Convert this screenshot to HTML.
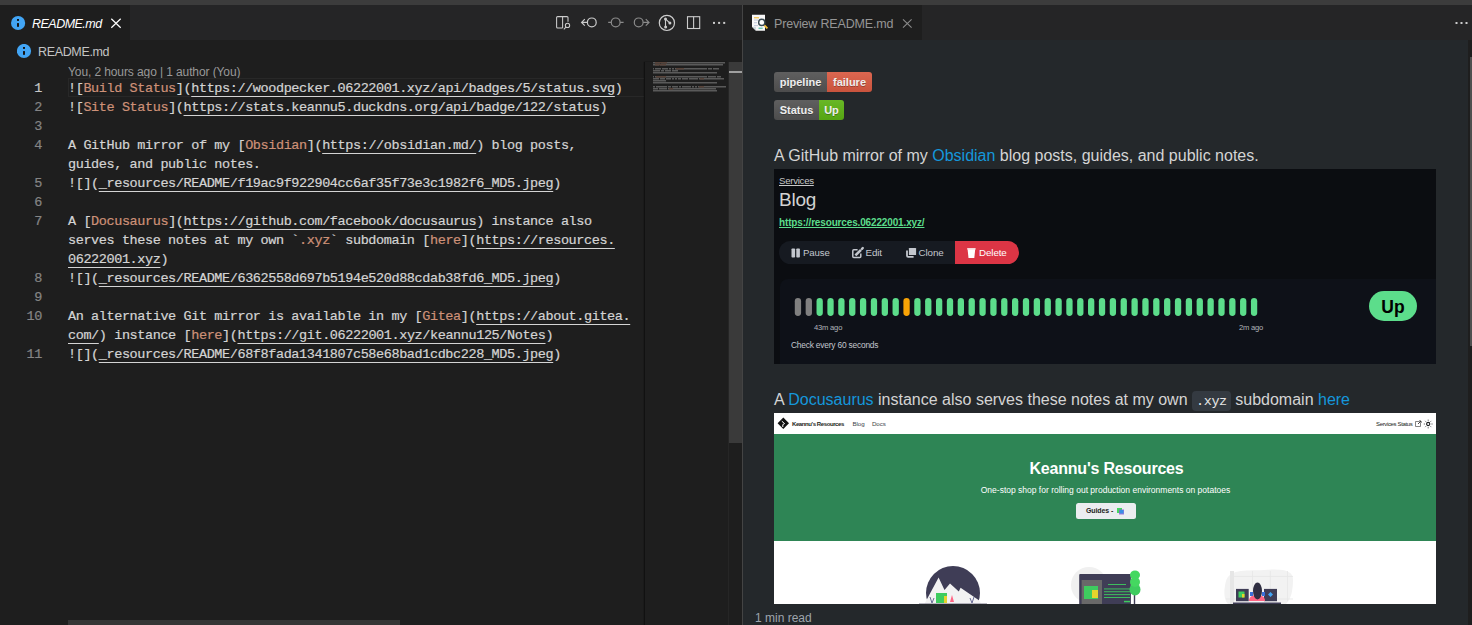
<!DOCTYPE html>
<html><head><meta charset="utf-8">
<style>
*{margin:0;padding:0;box-sizing:border-box}
html,body{width:1472px;height:625px;overflow:hidden;background:#1e1e1e;font-family:"Liberation Sans",sans-serif}
.abs{position:absolute}
#titlestrip{left:0;top:0;width:1472px;height:5px;background:#3c3c3c}
#tabbar1{left:0;top:5px;width:742px;height:35px;background:#252526}
#tabbar2{left:743px;top:5px;width:729px;height:35px;background:#252526}
#divider{left:742px;top:5px;width:1px;height:620px;background:#444444}
.tab{top:5px;height:35px;background:#1e1e1e}
.tabtxt{white-space:pre;font-size:12.5px;letter-spacing:-0.2px}
.mono{font-family:"Liberation Mono",monospace;font-size:13.5px;letter-spacing:-0.4px;white-space:pre;-webkit-text-stroke:0.2px currentColor}
.ln{position:absolute;left:0;width:42px;text-align:right;color:#858585;height:19px;line-height:20px;padding-top:1px}
.row{position:absolute;left:68px;height:19px;line-height:20px;padding-top:1px;color:#d4d4d4}
.lk{color:#ce9178}
.u{text-decoration:underline;text-underline-offset:4px;text-decoration-thickness:1px}
#preview{left:743px;top:40px;width:729px;height:585px;background:#24282b;overflow:hidden}
.pp{position:absolute;left:31px;font-size:16px;color:#d4d4d4;white-space:pre;line-height:20px}
.plink{color:#1597db}
</style></head>
<body>
<div id="titlestrip" class="abs"></div>
<div id="tabbar1" class="abs"></div>
<div id="tabbar2" class="abs"></div>
<!-- left active tab -->
<div class="abs tab" style="left:0;width:130px"></div>
<svg class="abs" style="left:10px;top:15px" width="16" height="16" viewBox="0 0 16 16"><circle cx="8.1" cy="8" r="7.1" fill="#42a5f5"/><rect x="7" y="8.1" width="2" height="3.7" fill="#141414"/><rect x="7" y="4" width="2" height="1.9" fill="#141414"/></svg>
<div class="abs tabtxt" style="left:32px;top:16.5px;color:#ffffff;font-style:italic;letter-spacing:-0.52px">README.md</div>
<svg class="abs" style="left:108px;top:15px" width="16" height="16" viewBox="0 0 16 16"><path d="M3.3 3.8L12.7 12.8M12.7 3.8L3.3 12.8" stroke="#ffffff" stroke-width="1.2"/></svg>


<!-- editor toolbar -->
<svg class="abs" style="left:550px;top:8px" width="200" height="30" viewBox="0 0 200 30" fill="none" stroke-linecap="butt">
 <!-- open preview -->
 <path d="M12.6 20H7.6Q6.6 20 6.6 19V9.6Q6.6 8.6 7.6 8.6H17Q18 8.6 18 9.6V13.8" stroke="#cccccc" stroke-width="1.05"/>
 <path d="M12.6 8.6V20" stroke="#cccccc" stroke-width="1.05"/>
 <circle cx="17.5" cy="17.4" r="2.15" stroke="#cccccc" stroke-width="1.05"/>
 <path d="M15.9 19.1L13.8 21.3" stroke="#cccccc" stroke-width="1.05"/>
 <!-- prev change -->
 <circle cx="41.8" cy="14.4" r="4.4" stroke="#cccccc" stroke-width="1.2"/>
 <path d="M37.4 14.4H31.8M34.8 11.2L31.6 14.4L34.8 17.6" stroke="#cccccc" stroke-width="1.2"/>
 <!-- revert / circle -->
 <circle cx="65.7" cy="14.4" r="4.4" stroke="#8a8a8a" stroke-width="1.2"/>
 <path d="M58.2 14.4H61.3M70.1 14.4H73.6" stroke="#8a8a8a" stroke-width="1.2"/>
 <!-- next change -->
 <circle cx="88.7" cy="14.4" r="4.4" stroke="#8a8a8a" stroke-width="1.2"/>
 <path d="M93.1 14.4H98.8M95.8 11.2L99 14.4L95.8 17.6" stroke="#8a8a8a" stroke-width="1.2"/>
 <!-- git graph -->
 <circle cx="116.9" cy="14.9" r="7.6" stroke="#cccccc" stroke-width="1.2"/>
 <path d="M115.5 10.9V19M115.5 10.9L119.9 15.1" stroke="#cccccc" stroke-width="1.1"/>
 <circle cx="115.5" cy="10.9" r="1.5" fill="#cccccc" stroke="none"/>
 <circle cx="115.6" cy="19" r="1.5" fill="#cccccc" stroke="none"/>
 <circle cx="119.9" cy="15.1" r="1.5" fill="#cccccc" stroke="none"/>
 <!-- split -->
 <rect x="137.5" y="8.7" width="12.2" height="11.8" stroke="#cccccc" stroke-width="1.1"/>
 <path d="M143.6 8.7V20.5" stroke="#cccccc" stroke-width="1.1"/>
 <!-- more -->
 <rect x="163" y="13.9" width="2" height="2" fill="#cccccc" stroke="none"/>
 <rect x="168.1" y="13.9" width="2" height="2" fill="#cccccc" stroke="none"/>
 <rect x="173.2" y="13.9" width="2" height="2" fill="#cccccc" stroke="none"/>
</svg>
<!-- editor -->
<div class="abs" style="left:0;top:40px;width:742px;height:585px;background:#1e1e1e"></div>


<!-- ============ PREVIEW ============ -->
<div class="abs tab" style="left:743px;width:179px"></div>
<svg class="abs" style="left:748px;top:10px" width="26" height="26" viewBox="0 0 26 26">
 <path d="M4 4.8H17V20.8H8L4 16.8Z" fill="#f7f7f7"/>
 <path d="M4 16.8H8V20.8Z" fill="#cfd8dc"/>
 <rect x="6" y="7.1" width="5" height="1.3" fill="#f3c556"/>
 <rect x="6" y="9.6" width="4" height="0.9" fill="#b9c3da"/>
 <rect x="6" y="12.3" width="3" height="0.9" fill="#b9c3da"/>
 <rect x="6" y="15.2" width="4" height="0.9" fill="#b9c3da"/>
 <rect x="10.5" y="17.6" width="4.2" height="1.3" fill="#5fc4b0"/>
 <path d="M16 14.9L19.4 18.3" stroke="#f3c13a" stroke-width="1.9"/>
 <circle cx="13.75" cy="12.4" r="3.1" fill="#ffffff" stroke="#37474f" stroke-width="1.4"/>
</svg>
<div class="abs tabtxt" style="left:774px;top:16.5px;color:#969696;letter-spacing:-0.18px">Preview README.md</div>
<svg class="abs" style="left:899px;top:15px" width="16" height="16" viewBox="0 0 16 16"><path d="M4 4.4L12.6 12.6M12.6 4.4L4 12.6" stroke="#8b8b8b" stroke-width="1.1"/></svg>
<svg class="abs" style="left:1450px;top:15px" width="22" height="16" viewBox="0 0 22 16"><rect x="5.5" y="7" width="2" height="2" fill="#cccccc"/><rect x="10.5" y="7" width="2" height="2" fill="#cccccc"/><rect x="15.5" y="7" width="2" height="2" fill="#cccccc"/></svg>

<div id="preview" class="abs">
 <!-- badges -->
 <div class="abs" style="left:31px;top:32px;width:98px;height:20px;border-radius:3px;overflow:hidden;font-size:11px;font-weight:bold;color:#fff;text-shadow:0 1px 0 rgba(1,1,1,.3)">
  <div class="abs" style="left:0;top:0;width:53px;height:20px;background:#555;line-height:20px;text-align:center">pipeline</div>
  <div class="abs" style="left:53px;top:0;width:45px;height:20px;background:#e05d44;line-height:20px;text-align:center">failure</div>
  <div class="abs" style="left:0;top:0;width:98px;height:20px;background:linear-gradient(rgba(187,187,187,.1),rgba(0,0,0,.1))"></div>
 </div>
 <div class="abs" style="left:31px;top:60px;width:70px;height:20px;border-radius:3px;overflow:hidden;font-size:11px;font-weight:bold;color:#fff;text-shadow:0 1px 0 rgba(1,1,1,.3)">
  <div class="abs" style="left:0;top:0;width:45px;height:20px;background:#555;line-height:20px;text-align:center">Status</div>
  <div class="abs" style="left:45px;top:0;width:25px;height:20px;background:#5fb715;line-height:20px;text-align:center">Up</div>
  <div class="abs" style="left:0;top:0;width:70px;height:20px;background:linear-gradient(rgba(187,187,187,.1),rgba(0,0,0,.1))"></div>
 </div>
 <!-- paragraph 1 -->
 <div class="pp" style="top:106px">A GitHub mirror of my <span class="plink">Obsidian</span> blog posts, guides, and public notes.</div>
 <!-- image 1: uptime kuma -->
 <div class="abs" style="left:31px;top:129px;width:662px;height:195px;background:#0b0d11;overflow:hidden" id="img1">
  <div class="abs" style="left:5px;top:5.5px;font-size:9.6px;color:#c8c8c8;text-decoration:underline;white-space:pre;letter-spacing:-0.25px">Services</div>
  <div class="abs" style="left:5px;top:20px;font-size:19px;color:#d2d2d2;white-space:pre;letter-spacing:-0.2px">Blog</div>
  <div class="abs" style="left:5px;top:48px;font-size:10px;font-weight:bold;color:#5cdd8b;text-decoration:underline;white-space:pre;letter-spacing:-0.15px">https://resources.06222001.xyz/</div>
  <div class="abs" style="left:5px;top:72px;width:240px;height:23px;border-radius:11.5px;background:#161a21;overflow:hidden">
   <div class="abs" style="left:176px;top:0;width:64px;height:23px;background:#dc3545"></div>
  </div>
  <svg class="abs" style="left:5px;top:72px" width="240" height="23" viewBox="0 0 240 23">
   <rect x="12.5" y="7.5" width="3.6" height="9" rx="0.8" fill="#c3c7ce"/><rect x="17.3" y="7.5" width="3.6" height="9" rx="0.8" fill="#c3c7ce"/>
   <path d="M78.6 8.8H74.8Q73.8 8.8 73.8 9.8V15.6Q73.8 16.6 74.8 16.6H80.8Q81.8 16.6 81.8 15.6V12.6" stroke="#c3c7ce" stroke-width="1.5" fill="none"/>
   <path d="M76.4 14.4L82 8.8" stroke="#c3c7ce" stroke-width="2.6"/>
   <path d="M83 7.8L83.8 7" stroke="#c3c7ce" stroke-width="2.4" stroke-linecap="round"/>
   <rect x="129.9" y="6.9" width="7.2" height="7.2" rx="0.6" fill="#c3c7ce"/>
   <path d="M128 9.6V14.8Q128 15.9 129.1 15.9H134.6" stroke="#c3c7ce" stroke-width="1.8" fill="none"/>
   <path d="M188.6 8.3H196.2L195.3 17H189.5Z" fill="#ffffff"/><rect x="188.2" y="7.2" width="8.4" height="1.3" fill="#ffffff"/>
  </svg>
  <div class="abs" style="left:29px;top:78px;font-size:9.6px;letter-spacing:-0.6px;color:#c3c7ce;white-space:pre;letter-spacing:-0.1px">Pause</div>
  <div class="abs" style="left:91.5px;top:78px;font-size:9.8px;letter-spacing:-0.35px;color:#c3c7ce;white-space:pre;letter-spacing:-0.1px">Edit</div>
  <div class="abs" style="left:144.5px;top:78px;font-size:9.8px;letter-spacing:-0.5px;color:#c3c7ce;white-space:pre;letter-spacing:-0.1px">Clone</div>
  <div class="abs" style="left:205px;top:78px;font-size:9.8px;letter-spacing:-0.45px;color:#ffffff;white-space:pre;letter-spacing:-0.1px">Delete</div>
  <div class="abs" style="left:6px;top:110px;width:656px;height:90px;border-radius:8px 0 0 0;background:#0e1118"></div>
  <svg class="abs" style="left:0;top:129px" width="500" height="18" viewBox="0 0 500 18"><rect x="20.80" y="0" width="6.3" height="18" rx="3.15" fill="#808080"/><rect x="31.66" y="0" width="6.3" height="18" rx="3.15" fill="#808080"/><rect x="42.52" y="0" width="6.3" height="18" rx="3.15" fill="#5cdd8b"/><rect x="53.38" y="0" width="6.3" height="18" rx="3.15" fill="#5cdd8b"/><rect x="64.24" y="0" width="6.3" height="18" rx="3.15" fill="#5cdd8b"/><rect x="75.10" y="0" width="6.3" height="18" rx="3.15" fill="#5cdd8b"/><rect x="85.96" y="0" width="6.3" height="18" rx="3.15" fill="#5cdd8b"/><rect x="96.82" y="0" width="6.3" height="18" rx="3.15" fill="#5cdd8b"/><rect x="107.68" y="0" width="6.3" height="18" rx="3.15" fill="#5cdd8b"/><rect x="118.54" y="0" width="6.3" height="18" rx="3.15" fill="#5cdd8b"/><rect x="129.40" y="0" width="6.3" height="18" rx="3.15" fill="#f8a306"/><rect x="140.26" y="0" width="6.3" height="18" rx="3.15" fill="#5cdd8b"/><rect x="151.12" y="0" width="6.3" height="18" rx="3.15" fill="#5cdd8b"/><rect x="161.98" y="0" width="6.3" height="18" rx="3.15" fill="#5cdd8b"/><rect x="172.84" y="0" width="6.3" height="18" rx="3.15" fill="#5cdd8b"/><rect x="183.70" y="0" width="6.3" height="18" rx="3.15" fill="#5cdd8b"/><rect x="194.56" y="0" width="6.3" height="18" rx="3.15" fill="#5cdd8b"/><rect x="205.42" y="0" width="6.3" height="18" rx="3.15" fill="#5cdd8b"/><rect x="216.28" y="0" width="6.3" height="18" rx="3.15" fill="#5cdd8b"/><rect x="227.14" y="0" width="6.3" height="18" rx="3.15" fill="#5cdd8b"/><rect x="238.00" y="0" width="6.3" height="18" rx="3.15" fill="#5cdd8b"/><rect x="248.86" y="0" width="6.3" height="18" rx="3.15" fill="#5cdd8b"/><rect x="259.72" y="0" width="6.3" height="18" rx="3.15" fill="#5cdd8b"/><rect x="270.58" y="0" width="6.3" height="18" rx="3.15" fill="#5cdd8b"/><rect x="281.44" y="0" width="6.3" height="18" rx="3.15" fill="#5cdd8b"/><rect x="292.30" y="0" width="6.3" height="18" rx="3.15" fill="#5cdd8b"/><rect x="303.16" y="0" width="6.3" height="18" rx="3.15" fill="#5cdd8b"/><rect x="314.02" y="0" width="6.3" height="18" rx="3.15" fill="#5cdd8b"/><rect x="324.88" y="0" width="6.3" height="18" rx="3.15" fill="#5cdd8b"/><rect x="335.74" y="0" width="6.3" height="18" rx="3.15" fill="#5cdd8b"/><rect x="346.60" y="0" width="6.3" height="18" rx="3.15" fill="#5cdd8b"/><rect x="357.46" y="0" width="6.3" height="18" rx="3.15" fill="#5cdd8b"/><rect x="368.32" y="0" width="6.3" height="18" rx="3.15" fill="#5cdd8b"/><rect x="379.18" y="0" width="6.3" height="18" rx="3.15" fill="#5cdd8b"/><rect x="390.04" y="0" width="6.3" height="18" rx="3.15" fill="#5cdd8b"/><rect x="400.90" y="0" width="6.3" height="18" rx="3.15" fill="#5cdd8b"/><rect x="411.76" y="0" width="6.3" height="18" rx="3.15" fill="#5cdd8b"/><rect x="422.62" y="0" width="6.3" height="18" rx="3.15" fill="#5cdd8b"/><rect x="433.48" y="0" width="6.3" height="18" rx="3.15" fill="#5cdd8b"/><rect x="444.34" y="0" width="6.3" height="18" rx="3.15" fill="#5cdd8b"/><rect x="455.20" y="0" width="6.3" height="18" rx="3.15" fill="#5cdd8b"/><rect x="466.06" y="0" width="6.3" height="18" rx="3.15" fill="#5cdd8b"/><rect x="476.92" y="0" width="6.3" height="18" rx="3.15" fill="#5cdd8b"/></svg>
  <div class="abs" style="left:40px;top:154px;font-size:7.6px;color:#b0b4ba;white-space:pre;letter-spacing:-0.2px">43m ago</div>
  <div class="abs" style="left:465px;top:154px;font-size:7.6px;color:#b0b4ba;white-space:pre;letter-spacing:-0.2px">2m ago</div>
  <div class="abs" style="left:17px;top:171px;font-size:8.4px;color:#c3c7ce;white-space:pre;letter-spacing:-0.2px">Check every 60 seconds</div>
  <div class="abs" style="left:595px;top:122px;width:48px;height:30px;border-radius:15px;background:#5cdd8b;text-align:center;font-size:17.5px;font-weight:bold;color:#000;line-height:33px">Up</div>

 </div>
 <!-- paragraph 2 -->
 <div class="pp" style="top:350px">A <span class="plink">Docusaurus</span> instance also serves these notes at my own <span style="font-family:'Liberation Mono',monospace;font-size:13.5px;letter-spacing:-0.4px;background:#343a41;border-radius:4px;padding:3px 4px 2px 4px;color:#e6e6e6">.xyz</span> subdomain <span class="plink">here</span></div>
 <!-- image 2: docusaurus -->
 <div class="abs" style="left:31px;top:373px;width:662px;height:191px;background:#ffffff;overflow:hidden" id="img2">
  <!-- navbar -->
  <svg class="abs" style="left:3px;top:4px" width="13" height="13" viewBox="0 0 13 13"><path d="M6.3 0.6L12 6.3L6.3 12L0.6 6.3Z" fill="#111"/><path d="M4.8 4.2L7.6 6.6L5.8 7.6V10" stroke="#fff" stroke-width="1" fill="none"/></svg>
  <div class="abs" style="left:18px;top:8px;font-size:6px;font-weight:bold;color:#1c1e21;white-space:pre;letter-spacing:-0.4px">Keannu's Resources</div>
  <div class="abs" style="left:78.5px;top:6.5px;font-size:6.2px;color:#40444a;white-space:pre;letter-spacing:-0.1px">Blog</div>
  <div class="abs" style="left:98px;top:6.5px;font-size:6.2px;color:#40444a;white-space:pre;letter-spacing:-0.1px">Docs</div>
  <div class="abs" style="left:602px;top:8px;font-size:6px;color:#1c1e21;white-space:pre;letter-spacing:-0.35px">Services Status</div>
  <svg class="abs" style="left:639.5px;top:7px" width="8" height="8" viewBox="0 0 8 8"><path d="M5 1.5H1.5V6.5H6.5V3" stroke="#666" stroke-width="0.8" fill="none"/><path d="M4 4L7 1M5 1H7V3" stroke="#333" stroke-width="0.9" fill="none"/></svg>
  <svg class="abs" style="left:648px;top:4.5px" width="12" height="12" viewBox="0 0 12 12"><circle cx="6.2" cy="6" r="1.6" fill="none" stroke="#1c1e21" stroke-width="1.1"/><path d="M6.2 1.6V2.8M6.2 9.2V10.4M1.8 6H3M9.4 6H10.6M3.1 2.9L3.9 3.7M8.5 8.3L9.3 9.1M3.1 9.1L3.9 8.3M8.5 3.7L9.3 2.9" stroke="#1c1e21" stroke-width="0.7"/></svg>
  <!-- hero -->
  <div class="abs" style="left:0;top:21px;width:662px;height:107px;background:#2e8555"></div>
  <div class="abs" style="left:0;top:47px;width:662px;text-align:center;font-size:16px;font-weight:bold;color:#fff;white-space:pre;letter-spacing:-0.2px;padding-left:3px">Keannu's Resources</div>
  <div class="abs" style="left:0;top:72px;width:662px;text-align:center;font-size:8.5px;color:#fff;white-space:pre;padding-left:1px">One-stop shop for rolling out production environments on potatoes</div>
  <div class="abs" style="left:302px;top:90px;width:60px;height:16px;border-radius:2.5px;background:#ebedf0"></div>
  <div class="abs" style="left:312px;top:94px;font-size:7px;font-weight:bold;color:#1c1e21;white-space:pre;letter-spacing:-0.1px">Guides - </div>
  <svg class="abs" style="left:342px;top:93px" width="10" height="10" viewBox="0 0 10 10"><rect x="1" y="2" width="5" height="5" fill="#44d860"/><rect x="3" y="3.5" width="5" height="5" fill="#8a5bd6" opacity=".8"/><rect x="4" y="4" width="3.5" height="3.5" fill="#3a8ee6"/></svg>
  <!-- illustrations -->
  <svg class="abs" style="left:0;top:128px" width="662" height="63" viewBox="0 0 662 63">
   <!-- 1: mountains -->
   <circle cx="179" cy="52" r="27" fill="#3f3d56"/>
   <path d="M150 64L152 60L164.6 36.4L170.5 49L176 42.4L184.8 50.6L186.6 46.7L206 60L207 64Z" fill="#f2f2f2"/>
   <path d="M156 56L158 62M160 57L158 62M200 56L198 62M196 57L198 62" stroke="#575a89" stroke-width="0.9"/>
   <rect x="162" y="52" width="11" height="10" fill="#3ecc5f"/><rect x="170" y="55" width="3" height="7" fill="#e6d32c"/>
   <path d="M176 61L178 54L180 61Z" fill="#ff6584"/>
   <path d="M145 62.5H213" stroke="#3f3d56" stroke-width="1" opacity=".35"/>
   <!-- 2: browser -->
   <circle cx="315" cy="44" r="18" fill="#f0f0f0"/>
   <rect x="305.2" y="32.9" width="51.7" height="31" rx="1" fill="#3f3d56"/>
   <rect x="307.6" y="39" width="20.4" height="25" fill="#696969"/>
   <rect x="310" y="45" width="14" height="13" fill="#3ecc5f"/><rect x="318" y="49" width="6" height="8" fill="#e6d32c"/>
   <rect x="334" y="43" width="18" height="0.9" fill="#3ecc5f"/>
   <rect x="330" y="47.5" width="26" height="0.9" fill="#3ecc5f"/>
   <rect x="330" y="50.3" width="26" height="0.9" fill="#3ecc5f"/>
   <rect x="330" y="53.2" width="26" height="0.9" fill="#3ecc5f"/>
   <rect x="330" y="56.1" width="26" height="0.9" fill="#3ecc5f"/>
   <rect x="350" y="59.8" width="6" height="1.5" fill="#3ecc5f"/>
   <rect x="359.8" y="52" width="1.4" height="11" fill="#3f3d56"/>
   <ellipse cx="361" cy="48.5" rx="5.5" ry="6" fill="#3ecc5f"/>
   <ellipse cx="361" cy="41" rx="5" ry="5" fill="#44d860"/>
   <ellipse cx="361" cy="34" rx="5" ry="4.5" fill="#44d860"/>
   <!-- 3: person -->
   <path d="M452 40C456 27 475 30 490 29C510 27 519 30 519 38C519 50 517 58 512 63H454C449 58 450 48 452 40Z" fill="#f2f2f2"/>
   <rect x="456" y="30" width="4" height="33" fill="#e6e6e6"/>
   <path d="M460 35.4H519M478.5 30V60M496.3 30V60M513.5 30V60M452 58H519" stroke="#e6e6e6" stroke-width="0.8"/>
   <rect x="462" y="47.9" width="12.7" height="12.3" fill="#3f3d56"/>
   <rect x="464.5" y="50.5" width="6" height="6" fill="#3ecc5f"/><rect x="468" y="53" width="2.5" height="3.5" fill="#e6d32c"/>
   <rect x="490" y="47.9" width="13" height="12.3" fill="#3f3d56"/>
   <path d="M496.5 51L499 53.5L496.5 56L494 53.5Z" fill="#42a5f5"/>
   <path d="M475 60C475 56 478 54 483 54C488 54 491 56 491 60Z" fill="#ff6584"/>
   <rect x="476" y="51" width="3" height="4" fill="#3a6fd8"/><rect x="488" y="51" width="3" height="4" fill="#3a6fd8"/>
   <ellipse cx="483.5" cy="50" rx="4.5" ry="8.5" fill="#2f2e41"/>
   <rect x="459" y="61.5" width="48" height="1.5" fill="#3f3d56"/>
  </svg>

 </div>
 <!-- bottom bar -->
 <div class="abs" style="left:0;top:564px;width:729px;height:21px;background:#24282b"></div>
 <div class="abs" style="left:12px;top:571px;font-size:12px;color:#9ea5ad;white-space:pre">1 min read</div>
 <!-- scrollbar -->
 <div class="abs" style="left:725px;top:0;width:4px;height:585px;background:#1e1e1e"></div>
 <div class="abs" style="left:727px;top:17px;width:2px;height:289px;background:#4f4f4f"></div>
</div>
<!-- breadcrumb -->
<svg class="abs" style="left:17px;top:44px" width="16" height="16" viewBox="0 0 16 16"><circle cx="7" cy="7" r="7.1" fill="#42a5f5"/><rect x="6" y="7.1" width="2" height="3.7" fill="#141414"/><rect x="6" y="3" width="2" height="1.9" fill="#141414"/></svg>
<div class="abs tabtxt" style="left:38px;top:45px;color:#c4c4c4;letter-spacing:-0.35px">README.md</div>
<!-- codelens -->
<div class="abs" style="left:68px;top:64.5px;font-size:12px;color:#999999;white-space:pre;letter-spacing:-0.1px">You, 2 hours ago | 1 author (You)</div>
<!-- current line highlight -->
<div class="abs" style="left:68px;top:78px;width:580px;height:19px;border:1px solid #282828"></div>
<div class="abs mono" style="left:0;top:0">
<div class="ln" style="top:78px;color:#c6c6c6">1</div>
<div class="ln" style="top:97px">2</div>
<div class="ln" style="top:116px">3</div>
<div class="ln" style="top:135px">4</div>
<div class="ln" style="top:173px">5</div>
<div class="ln" style="top:192px">6</div>
<div class="ln" style="top:211px">7</div>
<div class="ln" style="top:268px">8</div>
<div class="ln" style="top:287px">9</div>
<div class="ln" style="top:306px">10</div>
<div class="ln" style="top:344px">11</div>
<div class="row" style="top:78px">![<span class="lk">Build Status</span>](<span class="u">https://woodpecker.06222001.xyz/api/badges/5/status.svg</span>)</div>
<div class="row" style="top:97px">![<span class="lk">Site Status</span>](<span class="u">https://stats.keannu5.duckdns.org/api/badge/122/status</span>)</div>
<div class="row" style="top:135px">A GitHub mirror of my [<span class="lk">Obsidian</span>](<span class="u">https://obsidian.md/</span>) blog posts,</div>
<div class="row" style="top:154px">guides, and public notes.</div>
<div class="row" style="top:173px">![](<span class="u">_resources/README/f19ac9f922904cc6af35f73e3c1982f6_MD5.jpeg</span>)</div>
<div class="row" style="top:211px">A [<span class="lk">Docusaurus</span>](<span class="u">https://github.com/facebook/docusaurus</span>) instance also</div>
<div class="row" style="top:230px">serves these notes at my own `<span class="lk">.xyz</span>` subdomain [<span class="lk">here</span>](<span class="u">https://resources.</span></div>
<div class="row" style="top:249px"><span class="u">06222001.xyz</span>)</div>
<div class="row" style="top:268px">![](<span class="u">_resources/README/6362558d697b5194e520d88cdab38fd6_MD5.jpeg</span>)</div>
<div class="row" style="top:306px">An alternative Git mirror is available in my [<span class="lk">Gitea</span>](<span class="u">https://about.gitea.</span></div>
<div class="row" style="top:325px"><span class="u">com/</span>) instance [<span class="lk">here</span>](<span class="u">https://git.06222001.xyz/keannu125/Notes</span>)</div>
<div class="row" style="top:344px">![](<span class="u">_resources/README/68f8fada1341807c58e68bad1cdbc228_MD5.jpeg</span>)</div>
</div>

<!-- minimap & scrollbar -->
<div class="abs" style="left:645px;top:62px;width:83px;height:563px;background:#1e1e1e;box-shadow:-1px 0 1px #111"></div>
<svg class="abs" style="left:645px;top:62px" width="83" height="32" viewBox="0 0 83 32"><g opacity="0.33"><rect x="8" y="0" width="7" height="1.5" fill="#d4d4d4"/><rect x="16" y="0" width="64" height="1.5" fill="#d4d4d4"/><rect x="10" y="0" width="12" height="1.5" fill="#ce9178"/><rect x="8" y="2" width="6" height="1.5" fill="#d4d4d4"/><rect x="15" y="2" width="63" height="1.5" fill="#d4d4d4"/><rect x="10" y="2" width="11" height="1.5" fill="#ce9178"/><rect x="8" y="6" width="1" height="1.5" fill="#d4d4d4"/><rect x="10" y="6" width="6" height="1.5" fill="#d4d4d4"/><rect x="17" y="6" width="6" height="1.5" fill="#d4d4d4"/><rect x="24" y="6" width="2" height="1.5" fill="#d4d4d4"/><rect x="27" y="6" width="2" height="1.5" fill="#d4d4d4"/><rect x="30" y="6" width="32" height="1.5" fill="#d4d4d4"/><rect x="63" y="6" width="4" height="1.5" fill="#d4d4d4"/><rect x="68" y="6" width="6" height="1.5" fill="#d4d4d4"/><rect x="31" y="6" width="8" height="1.5" fill="#ce9178"/><rect x="8" y="8" width="7" height="1.5" fill="#d4d4d4"/><rect x="16" y="8" width="3" height="1.5" fill="#d4d4d4"/><rect x="20" y="8" width="6" height="1.5" fill="#d4d4d4"/><rect x="27" y="8" width="6" height="1.5" fill="#d4d4d4"/><rect x="8" y="10" width="64" height="1.5" fill="#d4d4d4"/><rect x="8" y="14" width="1" height="1.5" fill="#d4d4d4"/><rect x="10" y="14" width="52" height="1.5" fill="#d4d4d4"/><rect x="63" y="14" width="8" height="1.5" fill="#d4d4d4"/><rect x="72" y="14" width="4" height="1.5" fill="#d4d4d4"/><rect x="11" y="14" width="10" height="1.5" fill="#ce9178"/><rect x="8" y="16" width="6" height="1.5" fill="#d4d4d4"/><rect x="15" y="16" width="5" height="1.5" fill="#d4d4d4"/><rect x="21" y="16" width="5" height="1.5" fill="#d4d4d4"/><rect x="27" y="16" width="2" height="1.5" fill="#d4d4d4"/><rect x="30" y="16" width="2" height="1.5" fill="#d4d4d4"/><rect x="33" y="16" width="3" height="1.5" fill="#d4d4d4"/><rect x="37" y="16" width="6" height="1.5" fill="#d4d4d4"/><rect x="44" y="16" width="9" height="1.5" fill="#d4d4d4"/><rect x="54" y="16" width="25" height="1.5" fill="#d4d4d4"/><rect x="55" y="16" width="4" height="1.5" fill="#ce9178"/><rect x="8" y="18" width="13" height="1.5" fill="#d4d4d4"/><rect x="8" y="20" width="64" height="1.5" fill="#d4d4d4"/><rect x="8" y="24" width="2" height="1.5" fill="#d4d4d4"/><rect x="11" y="24" width="11" height="1.5" fill="#d4d4d4"/><rect x="23" y="24" width="3" height="1.5" fill="#d4d4d4"/><rect x="27" y="24" width="6" height="1.5" fill="#d4d4d4"/><rect x="34" y="24" width="2" height="1.5" fill="#d4d4d4"/><rect x="37" y="24" width="9" height="1.5" fill="#d4d4d4"/><rect x="47" y="24" width="2" height="1.5" fill="#d4d4d4"/><rect x="50" y="24" width="2" height="1.5" fill="#d4d4d4"/><rect x="53" y="24" width="28" height="1.5" fill="#d4d4d4"/><rect x="54" y="24" width="5" height="1.5" fill="#ce9178"/><rect x="8" y="26" width="5" height="1.5" fill="#d4d4d4"/><rect x="14" y="26" width="8" height="1.5" fill="#d4d4d4"/><rect x="23" y="26" width="48" height="1.5" fill="#d4d4d4"/><rect x="24" y="26" width="4" height="1.5" fill="#ce9178"/><rect x="8" y="28" width="64" height="1.5" fill="#d4d4d4"/></g></svg>
<div class="abs" style="left:728px;top:62px;width:14px;height:563px;background:#1e1e1e;border-left:1px solid #262626"></div>
<div class="abs" style="left:729px;top:62px;width:13px;height:381px;background:#3a3a3a"></div>
<div class="abs" style="left:729px;top:71px;width:13px;height:2px;background:#a0a0a0"></div>
<!-- horizontal scrollbar -->
<div class="abs" style="left:68px;top:620px;width:332px;height:5px;background:#353535"></div>
<div id="divider" class="abs"></div>
</body></html>
